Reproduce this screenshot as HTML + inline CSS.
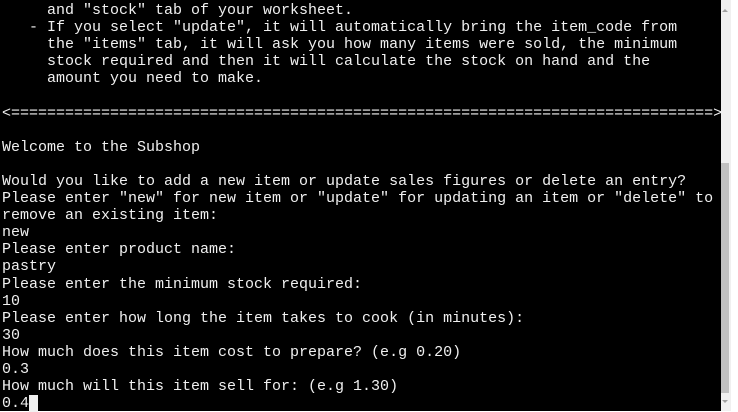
<!DOCTYPE html>
<html><head><style>
html,body{margin:0;padding:0;background:#fff;width:738px;height:411px;overflow:hidden}
#t{position:absolute;left:0;top:0;width:721px;height:411px;background:#000}
pre{margin:0;padding:2px 0 0 2px;font-family:"Liberation Mono",monospace;font-size:15px;line-height:17.1px;color:#f0f0f0;white-space:pre}
#sb{position:absolute;left:721px;top:0;width:10px;height:411px;background:#f0f0f0}
#th{position:absolute;left:721px;top:163px;width:8px;height:230px;background:#c1c1c1}
.cur{background:#f0f0f0;color:#000}
.up{position:absolute;left:722px;top:9px;width:0;height:0;border-left:3px solid transparent;border-right:3px solid transparent;border-bottom:3px solid #a0a0a0}
.dn{position:absolute;left:722px;top:400px;width:0;height:0;border-left:3px solid transparent;border-right:3px solid transparent;border-top:3px solid #a0a0a0}
</style></head><body>
<div id="t"><pre>     and "stock" tab of your worksheet.
   - If you select "update", it will automatically bring the item_code from
     the "items" tab, it will ask you how many items were sold, the minimum
     stock required and then it will calculate the stock on hand and the
     amount you need to make.

&lt;==============================================================================&gt;

Welcome to the Subshop

Would you like to add a new item or update sales figures or delete an entry?
Please enter "new" for new item or "update" for updating an item or "delete" to
remove an existing item:
new
Please enter product name:
pastry
Please enter the minimum stock required:
10
Please enter how long the item takes to cook (in minutes):
30
How much does this item cost to prepare? (e.g 0.20)
0.3
How much will this item sell for: (e.g 1.30)
0.4<span class="cur"> </span></pre></div>
<div id="sb"></div><div id="th"></div><div class="up"></div><div class="dn"></div>
</body></html>
